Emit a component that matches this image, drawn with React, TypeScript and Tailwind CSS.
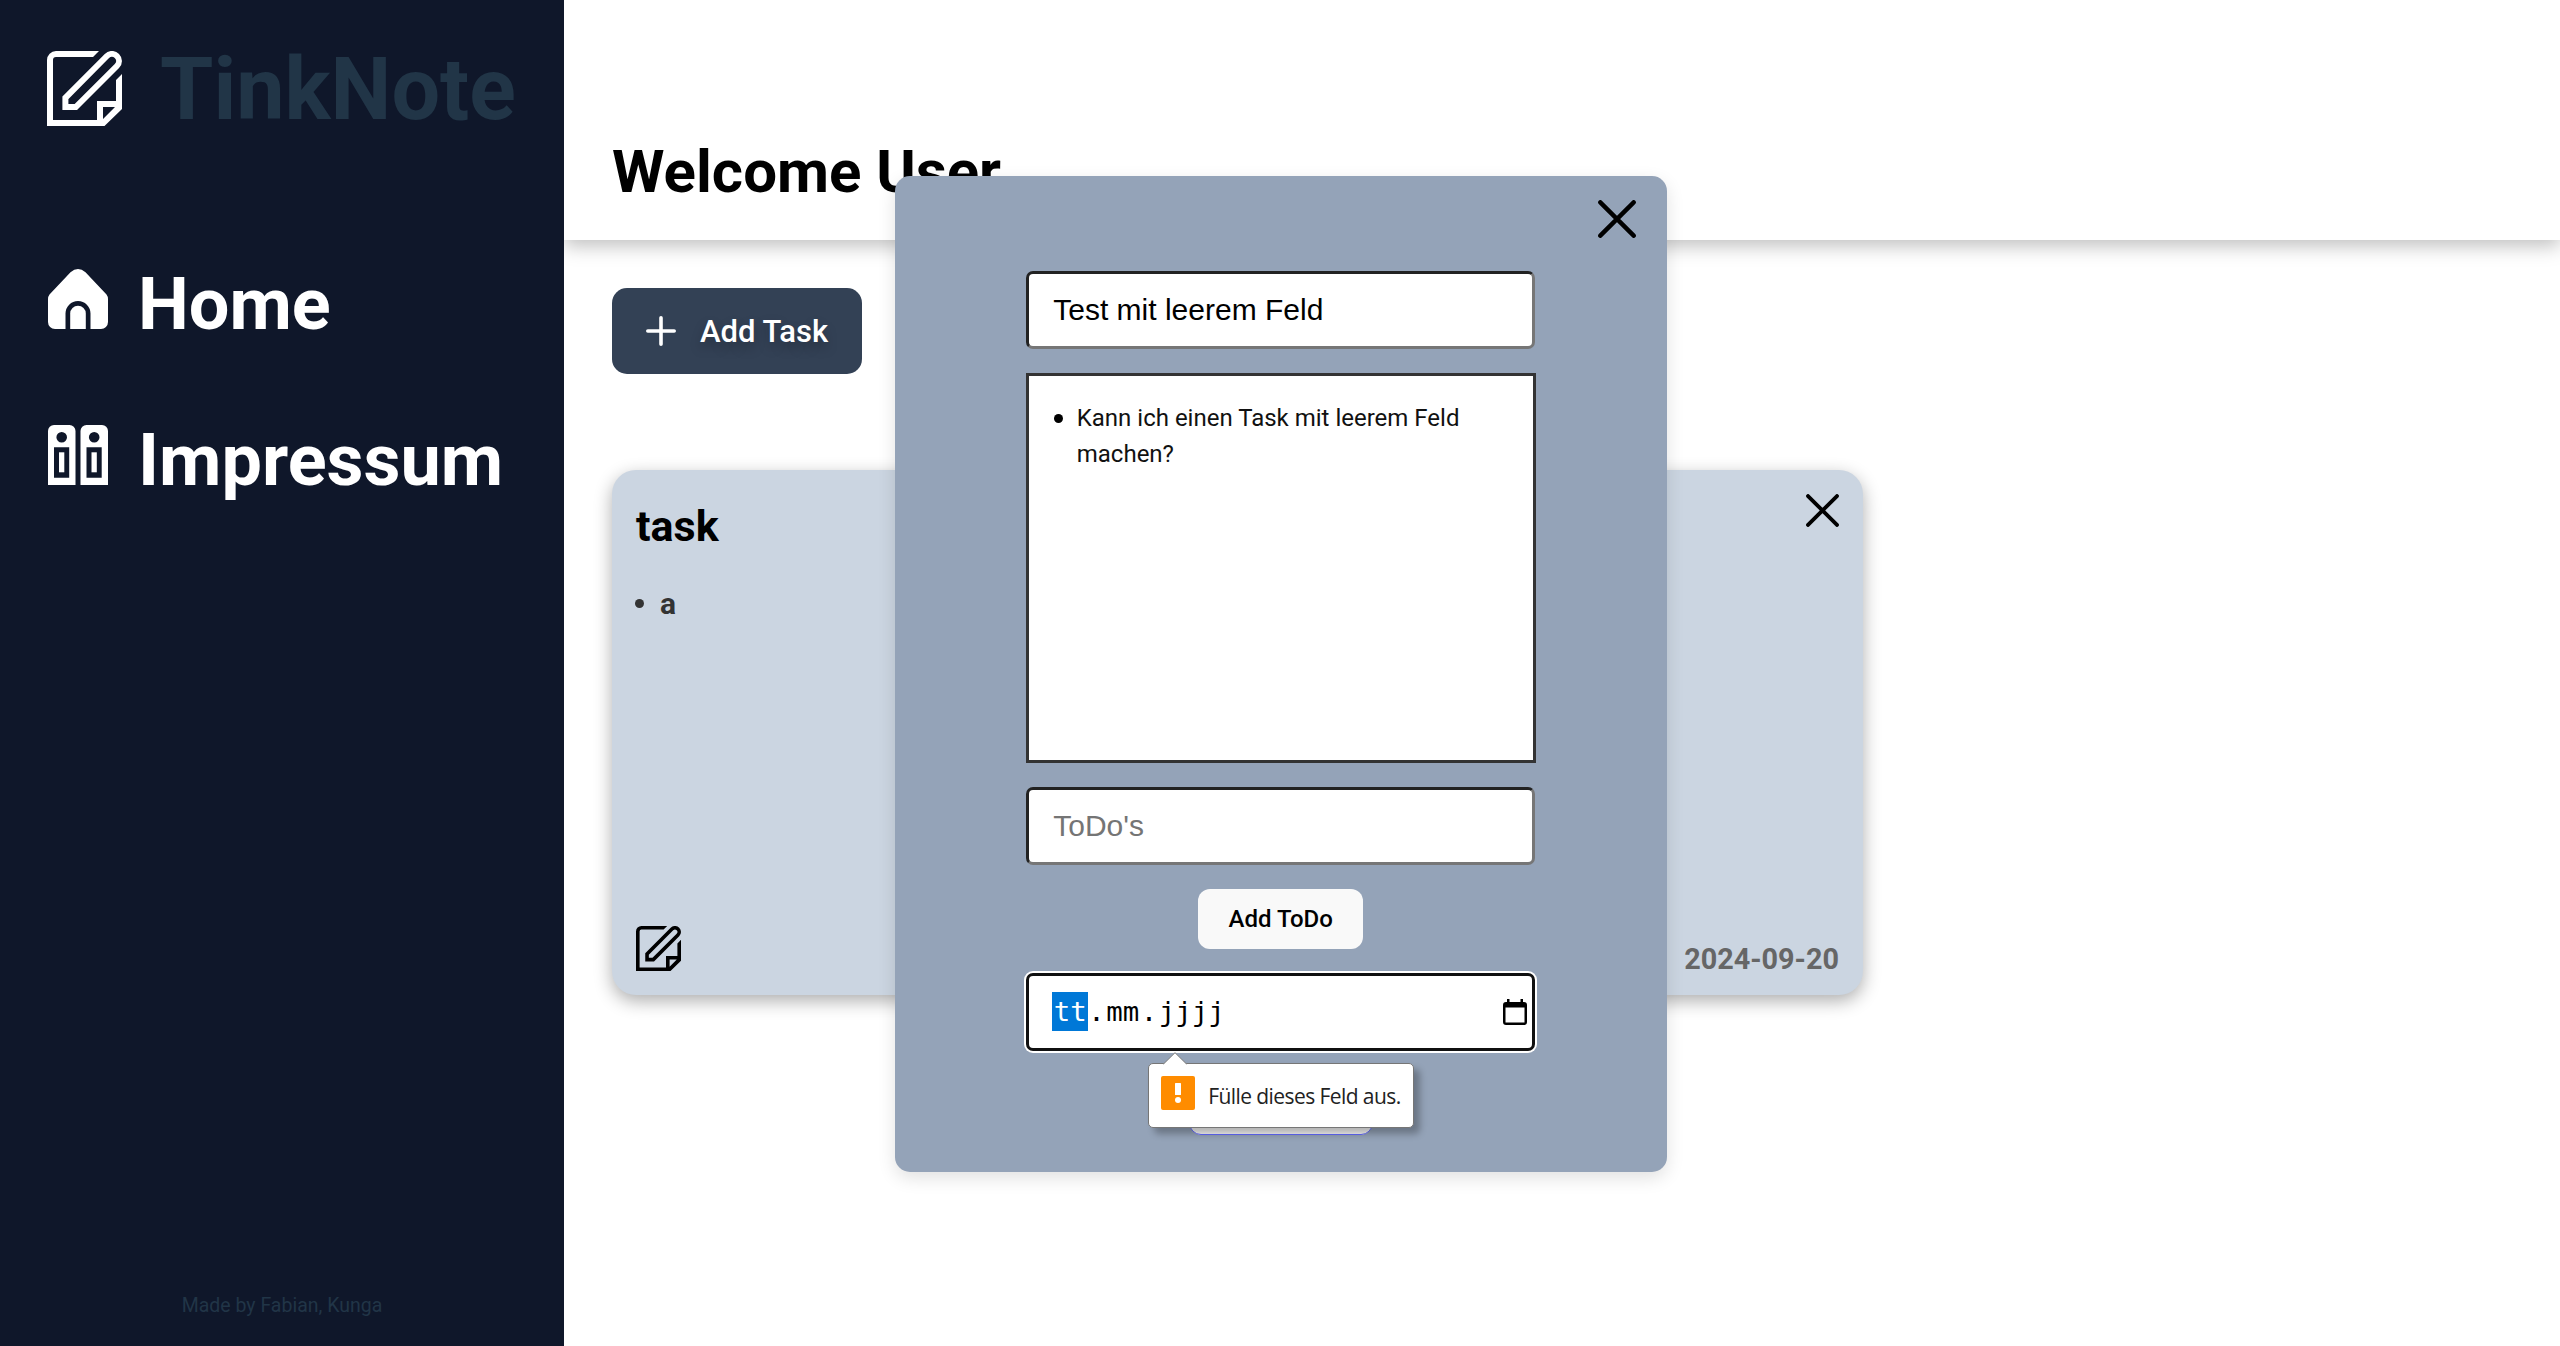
import type { ReactNode } from "react";

function NoteIcon({ className }: { className?: string }) {
  return (
    <svg viewBox="0 0 75 75" className={className} fill="none" stroke="currentColor" strokeWidth="6">
      <path d="M52 0 H9 A9 9 0 0 0 0 9 V75 H57.5 L75 58 V23 L69 29 V50 H50 V69 H6 V9 A3 3 0 0 1 9 6 H46 Z M56 56 H68 L56 68 Z" fill="currentColor" fillRule="evenodd" stroke="none" />
      <path d="M18.4 56 H28.8 L69.9 15 A7.07 7.07 0 0 0 59.9 5 L18.4 46.8 Z" />
    </svg>
  );
}

function HomeIcon() {
  return (
    <svg viewBox="0 0 60 60" className="size-[60px] shrink-0">
      <path d="M0 30 Q0 27.500 1.500 25.500 L22.500 3.200 Q30 -3.200 37.500 3.200 L58.500 25.500 Q60 27.500 60 30 V53 A7 7 0 0 1 53 60 H42.500 V44.500 A12.500 12.500 0 0 0 17.500 44.500 V60 H7 A7 7 0 0 1 0 53 Z" fill="white" />
      <path d="M22.200 60 V44.500 A7.800 7.800 0 0 1 37.800 44.500 V60 Z" fill="white" />
    </svg>
  );
}

function Binder() {
  return (
    <>
      <path fillRule="evenodd" d="M0 60 V6 A6 6 0 0 1 6 0 H21.500 A6 6 0 0 1 27.500 6 V60 Z M13.700 7 A5.300 5.300 0 1 0 13.700 17.600 A5.300 5.300 0 1 0 13.700 7 Z M6 22.300 V52.700 H21.200 V22.300 Z" />
      <path d="M11 27.300 H16.300 V47.300 H11 Z" />
    </>
  );
}

function ImprintIcon() {
  return (
    <svg viewBox="0 0 60 60" className="size-[60px] shrink-0" fill="white">
      <Binder />
      <g transform="translate(32.5 0)">
        <Binder />
      </g>
    </svg>
  );
}

function CrossIcon({ className }: { className?: string }) {
  return (
    <svg viewBox="0 0 36 36" className={className} fill="none" stroke="black" strokeWidth="4.2" strokeLinecap="round">
      <path d="M2.200 2.200 L33.800 33.800 M33.800 2.200 L2.200 33.800" />
    </svg>
  );
}

function NavItem({ icon, label }: { icon: ReactNode; label: string }) {
  return (
    <a className="flex h-[108px] items-start pt-[19px] text-white">
      {icon}
      <span className="-mt-[18px] ml-[30px] text-[72px] leading-[108px] font-bold">{label}</span>
    </a>
  );
}

function Sidebar() {
  return (
    <aside className="relative z-10 flex h-full w-[564px] shrink-0 flex-col bg-[#0f172a] pl-[48px]">
      <div className="-ml-px flex h-[170px] items-start pt-[51px]">
        <NoteIcon className="size-[75px] shrink-0 text-white" />
        <span className="-mt-[24px] ml-[38px] text-[86.200px] leading-[126px] font-bold text-[#213547]">TinkNote</span>
      </div>
      <nav className="mt-[80px] flex flex-col gap-[48px]">
        <NavItem icon={<HomeIcon />} label="Home" />
        <NavItem icon={<ImprintIcon />} label="Impressum" />
      </nav>
      <footer className="mt-auto mb-[25px] -ml-[48px] text-center text-[19.500px] leading-[30px] text-[#213547]">
        Made by Fabian, Kunga
      </footer>
    </aside>
  );
}

function TaskCard() {
  return (
    <article className="mt-[96px] flex h-[525px] w-[1251px] flex-col rounded-[24px] bg-[#cbd5e1] p-[24px] shadow-[0_6px_18px_rgba(0,0,0,0.32)]">
      <div className="flex items-start justify-between">
        <h2 className="text-[43px] leading-[64px] font-bold text-black">task</h2>
        <CrossIcon className="size-[33px]" />
      </div>
      <ul className="mt-[23px] -ml-px flex items-center text-[30px] leading-[45px] font-bold text-[#333]">
        <li className="flex items-center">
          <span className="mr-[16px] size-[9px] rounded-full bg-[#333]" />a
        </li>
      </ul>
      <div className="mt-auto flex items-end justify-between">
        <NoteIcon className="size-[45px] text-black" />
        <time className="-mb-[11px] text-[28.800px] leading-[45px] font-bold text-[#666]">2024-09-20</time>
      </div>
    </article>
  );
}

function ValidationBubble() {
  return (
    <div className="absolute top-[87px] left-[119px] z-10 flex h-[65px] w-[266px] items-center rounded-[5px] border border-[#767676] bg-white pl-[12px] shadow-[6px_6px_7px_rgba(0,0,0,0.28)]">
      <svg viewBox="0 0 26 13" className="absolute -top-[12px] left-[13px] h-[13px] w-[26px]">
        <path d="M1 12.500 L13 0.500 L25 12.500 V13 H1 Z" fill="white" />
        <path d="M1.500 12 L13 0.700 L24.500 12" fill="none" stroke="#767676" />
      </svg>
      <svg viewBox="0 0 34 34" className="-mt-[5px] size-[34px] shrink-0">
        <rect width="34" height="34" rx="2" fill="#ff8c00" />
        <rect x="14" y="7" width="6" height="12" rx="0.500" fill="white" />
        <circle cx="17" cy="24" r="3" fill="white" />
      </svg>
      <span className="mt-[1px] ml-[13px] whitespace-nowrap font-['Open_Sans',sans-serif] text-[21px] leading-[30px] tracking-[-0.580px] text-[#222]">
        Fülle dieses Feld aus.
      </span>
    </div>
  );
}

function DateField() {
  return (
    <div className="relative mt-[24px] flex h-[78px] w-[509px] items-center rounded-[7px] border-[3px] border-[#101010] bg-white pr-[5px] pl-[23px] font-['DejaVu_Sans_Mono',monospace] text-[27.400px] text-black shadow-[0_0_0_2px_white]">
      <span className="-mt-px flex h-[39px] items-center bg-[#0078d7] px-[1.500px] leading-[39px] text-white">tt</span>
      <span>.</span>
      <span className="px-[1.500px]">mm</span>
      <span>.</span>
      <span className="px-[1.500px]">jjjj</span>
      <svg viewBox="0 0 24 26" className="ml-auto h-[26px] w-[24px]">
        <path fillRule="evenodd" d="M3 3 H4 V0 H6.500 V3 H17.500 V0 H20 V3 H21 A3 3 0 0 1 24 6 V23 A3 3 0 0 1 21 26 H3 A3 3 0 0 1 0 23 V6 A3 3 0 0 1 3 3 Z M2.500 8.500 V23.500 H21.500 V8.500 Z" />
      </svg>
      <ValidationBubble />
    </div>
  );
}

function TaskDialog() {
  return (
    <section className="absolute top-[176px] left-[895px] z-20 flex h-[995.500px] w-[771.500px] flex-col items-center rounded-[15px] bg-[#94a3b8] shadow-[0_6px_18px_rgba(0,0,0,0.12)]">
      <div className="flex h-[95px] w-full shrink-0 justify-end pt-[24px] pr-[31px]">
        <CrossIcon className="size-[38px]" />
      </div>
      <div className="flex h-[78px] w-[509px] shrink-0 items-center rounded-[7px] border-[3px] border-t-[#222] border-r-[#767676] border-b-[#767676] border-l-[#222] bg-white pb-[2px] pl-[24px] font-['Liberation_Sans',sans-serif] text-[30px] text-black">
        Test mit leerem Feld
      </div>
      <div className="mt-[24px] h-[390px] w-[510px] shrink-0 border-[3px] border-[#333] bg-white pt-[24px] pl-[25px] text-[24px] leading-[36px] text-[#111]">
        <div className="flex">
          <span className="mt-[14px] mr-[14px] size-[9px] shrink-0 rounded-full bg-black" />
          <p className="w-[410px]">Kann ich einen Task mit leerem Feld machen?</p>
        </div>
      </div>
      <div className="mt-[24px] flex h-[78px] w-[509px] shrink-0 items-center rounded-[7px] border-[3px] border-t-[#222] border-r-[#767676] border-b-[#767676] border-l-[#222] bg-white pb-[2px] pl-[24px] font-['Liberation_Sans',sans-serif] text-[30px] text-[#757575]">
        ToDo's
      </div>
      <button className="mt-[24px] h-[60px] w-[165px] shrink-0 rounded-[12px] bg-[#f9f9f9] text-[24px] font-medium text-black">
        Add ToDo
      </button>
      <DateField />
      <button className="mt-[24px] h-[60px] w-[184px] shrink-0 rounded-[12px] border border-[#646cff] bg-[#f9f9f9] text-[24px] font-medium text-black" />
    </section>
  );
}

export default function App() {
  return (
    <div className="relative flex h-[1346px] w-[2560px] overflow-hidden bg-white font-[Roboto,sans-serif]">
      <Sidebar />
      <main className="flex grow flex-col">
        <header className="flex h-[240px] items-end bg-white pb-[23px] pl-[48px] shadow-[0_6px_18px_rgba(0,0,0,0.25)]">
          <h1 className="text-[60px] leading-[90px] font-bold text-black">Welcome User</h1>
        </header>
        <div className="flex flex-col items-start pt-[48px] pl-[48px]">
          <button className="flex h-[86px] w-[250px] items-center rounded-[15px] bg-[#334155] pl-[34px] text-[31px] font-medium text-white">
            <svg viewBox="0 0 30 30" className="size-[30px]" stroke="white" strokeWidth="3.6" strokeLinecap="round">
              <path d="M15 1.800 V28.200 M1.800 15 H28.200" />
            </svg>
            <span className="mt-[2px] ml-[24px] whitespace-nowrap [text-shadow:0_6px_12px_rgba(0,0,0,0.25)]">Add Task</span>
          </button>
          <TaskCard />
        </div>
      </main>
      <TaskDialog />
    </div>
  );
}
